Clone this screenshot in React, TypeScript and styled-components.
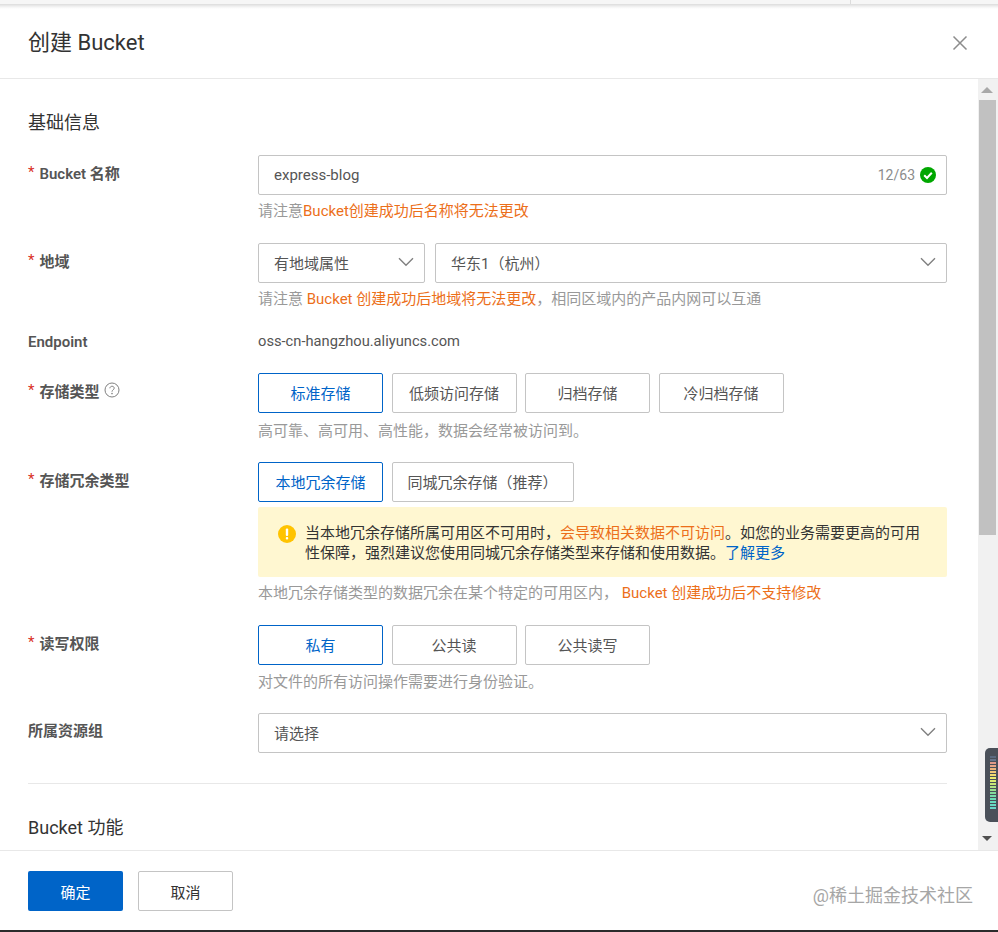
import React from 'react';
import styled, { createGlobalStyle } from 'styled-components';

const GlobalStyle = createGlobalStyle`
  html, body {
    margin: 0;
    padding: 0;
    background: #fff;
  }
  * {
    box-sizing: border-box;
  }
`;

const Chevron = () => (
  <svg width="16" height="10" viewBox="0 0 16 10" fill="none">
    <path d="M1 1.2 L8 8.2 L15 1.2" stroke="#808080" strokeWidth="1.4" />
  </svg>
);

const storageTypes = ['标准存储', '低频访问存储', '归档存储', '冷归档存储'];
const acl = ['私有', '公共读', '公共读写'];
const meterColors = [
  '#5a6a80', '#66768c', '#e09a88', '#e6a484', '#ecb47c', '#f0c878', '#f2dc70', '#ecec70', '#dcec74',
  '#c8e878', '#b0e484', '#98e090', '#84dc9c', '#74dca8', '#6cdcb4', '#68dcbc', '#68dcc4', '#68d8c8',
];

const App: React.FC = () => {
  return (
    <>
      <GlobalStyle />
      <Page>
        <TopStrip><StripTick /></TopStrip>
        <Header>
          <Title>创建 Bucket</Title>
          <CloseIcon width="16" height="16" viewBox="0 0 16 16" fill="none">
            <path d="M1.5 1.5 L14.5 14.5 M14.5 1.5 L1.5 14.5" stroke="#8c8c8c" strokeWidth="1.5" />
          </CloseIcon>
        </Header>
        <Body>
          <Content>
            <SectionTitle>基础信息</SectionTitle>

            <Row>
              <Label $required>Bucket 名称</Label>
              <Control>
                <Field>
                  <span>express-blog</span>
                  <Counter>
                    <CounterText>12/63</CounterText>
                    <svg width="16" height="16" viewBox="0 0 16 16">
                      <circle cx="8" cy="8" r="8" fill="#00a700" />
                      <path d="M4.2 8.2 L7 11 L11.8 5.8" stroke="#fff" strokeWidth="2" fill="none" />
                    </svg>
                  </Counter>
                </Field>
                <Help>请注意<Warn>Bucket创建成功后名称将无法更改</Warn></Help>
              </Control>
            </Row>

            <Row>
              <Label $required>地域</Label>
              <Control>
                <SelectGroup>
                  <Select $width={167}>
                    <span>有地域属性</span>
                    <Chevron />
                  </Select>
                  <Select $grow>
                    <span>华东1（杭州）</span>
                    <Chevron />
                  </Select>
                </SelectGroup>
                <Help>请注意 <Warn>Bucket 创建成功后地域将无法更改</Warn>，相同区域内的产品内网可以互通</Help>
              </Control>
            </Row>

            <Row $gap={21}>
              <Label $top={1}>Endpoint</Label>
              <Control><Plain>oss-cn-hangzhou.aliyuncs.com</Plain></Control>
            </Row>

            <Row $gap={21}>
              <Label $required>
                存储类型
                <svg width="16" height="16" viewBox="0 0 16 16" fill="none">
                  <circle cx="8" cy="8" r="7" stroke="#808080" />
                  <path d="M5.9 6.3 C5.9 3.6 10.2 3.6 10.2 6.2 C10.2 7.8 8 7.9 8 9.7" stroke="#808080" />
                  <circle cx="8" cy="11.6" r="0.8" fill="#808080" />
                </svg>
              </Label>
              <Control>
                <Options>
                  {storageTypes.map((t, i) => (
                    <Option key={t} $active={i === 0}>{t}</Option>
                  ))}
                </Options>
                <Help $top={8}>高可靠、高可用、高性能，数据会经常被访问到。</Help>
              </Control>
            </Row>

            <Row>
              <Label $required>存储冗余类型</Label>
              <Control>
                <Options>
                  <Option $active>本地冗余存储</Option>
                  <Option $width={182}>同城冗余存储（推荐）</Option>
                </Options>
                <Alert>
                  <svg width="18" height="18" viewBox="0 0 18 18">
                    <circle cx="9" cy="9" r="9" fill="#ffc300" />
                    <rect x="7.8" y="3.6" width="2.4" height="7.4" rx="1" fill="#fff" />
                    <rect x="7.8" y="12" width="2.4" height="2.4" rx="1" fill="#fff" />
                  </svg>
                  <AlertText>
                    当本地冗余存储所属可用区不可用时，<Warn>会导致相关数据不可访问</Warn>。如您的业务需要更高的可用性保障，强烈建议您使用同城冗余存储类型来存储和使用数据。<Link>了解更多</Link>
                  </AlertText>
                </Alert>
                <Help>本地冗余存储类型的数据冗余在某个特定的可用区内， <Warn>Bucket 创建成功后不支持修改</Warn></Help>
              </Control>
            </Row>

            <Row $gap={21}>
              <Label $required>读写权限</Label>
              <Control>
                <Options>
                  {acl.map((t, i) => (
                    <Option key={t} $active={i === 0}>{t}</Option>
                  ))}
                </Options>
                <Help $top={7}>对文件的所有访问操作需要进行身份验证。</Help>
              </Control>
            </Row>

            <Row $gap={30}>
              <Label $top={6}>所属资源组</Label>
              <Control>
                <Select>
                  <span>请选择</span>
                  <Chevron />
                </Select>
              </Control>
            </Row>

            <Divider />
            <SectionTitle>Bucket 功能</SectionTitle>
          </Content>
          <Scrollbar>
            <ScrollButton>
              <svg width="12" height="6" viewBox="0 0 12 6"><path d="M6 0 L12 6 L0 6 Z" fill="#a8a8a8" /></svg>
            </ScrollButton>
            <Thumb />
            <ScrollBottom>
              <svg width="10" height="5" viewBox="0 0 10 5"><path d="M0 0 L10 0 L5 5 Z" fill="#505050" /></svg>
            </ScrollBottom>
          </Scrollbar>
          <Meter>
            {meterColors.map((c, i) => (
              <MeterLine key={i} $color={c} />
            ))}
          </Meter>
        </Body>
        <Footer>
          <PrimaryButton>确定</PrimaryButton>
          <CancelButton>取消</CancelButton>
          <Watermark>@稀土掘金技术社区</Watermark>
        </Footer>
        <BottomBar />
      </Page>
    </>
  );
};

export default App;

const Page = styled.div`
  position: relative;
  display: flex;
  flex-direction: column;
  width: 998px;
  height: 932px;
  overflow: hidden;
  background: #fff;
  color: #333;
  font-family: Roboto, "Noto Sans CJK SC", sans-serif;
  font-size: 15px;
`;

const TopStrip = styled.div`
  flex: none;
  position: relative;
  height: 9px;
  background: linear-gradient(#f6f6f6 0, #f6f6f6 4px, #dcdcdc 4px, #f4f4f4 7px, #fff 9px);
`;

const StripTick = styled.div`
  position: absolute;
  left: 850px;
  top: 0;
  width: 1px;
  height: 4px;
  background: #dcdcdc;
`;

const Header = styled.header`
  flex: none;
  display: flex;
  align-items: center;
  justify-content: space-between;
  height: 70px;
  padding: 0 30px 2px 28px;
  border-bottom: 1px solid #e8e8e8;
`;

const Title = styled.h1`
  margin: 0;
  font-size: 22px;
  font-weight: 400;
  line-height: 30px;
  color: #333;
`;

const CloseIcon = styled.svg`
  display: block;
`;

const Body = styled.main`
  flex: 1;
  position: relative;
  display: flex;
  min-height: 0;
`;

const Content = styled.div`
  flex: 1;
  min-width: 0;
  padding: 32px 31px 0 28px;
  overflow: hidden;
`;

const SectionTitle = styled.h2`
  margin: 0 0 20px;
  font-size: 18px;
  font-weight: 400;
  line-height: 24px;
  color: #333;
`;

const Row = styled.div<{ $gap?: number }>`
  display: flex;
  margin-bottom: ${(p) => p.$gap ?? 22}px;
`;

const Label = styled.div<{ $required?: boolean; $top?: number }>`
  flex: none;
  display: flex;
  align-items: center;
  align-self: flex-start;
  gap: 5px;
  width: 230px;
  height: 20px;
  margin-top: ${(p) => p.$top ?? (p.$required ? 7 : 0)}px;
  font-size: 15px;
  font-weight: 600;
  color: #555;

  &::before {
    content: ${(p) => (p.$required ? "'*'" : 'none')};
    color: #d93026;
    font-weight: 400;
  }
`;

const Control = styled.div`
  flex: 1;
  min-width: 0;
`;

const Field = styled.div<{ $width?: number; $grow?: boolean }>`
  display: flex;
  align-items: center;
  justify-content: space-between;
  flex: ${(p) => (p.$grow ? 1 : 'none')};
  width: ${(p) => (p.$width ? `${p.$width}px` : 'auto')};
  height: 40px;
  padding: 0 10px 0 15px;
  border: 1px solid #c4c4c4;
  border-radius: 2px;
  color: #555;
  font-size: 15px;
`;

const Select = styled(Field)`
  padding-bottom: 2px;
`;

const Counter = styled.span`
  display: flex;
  align-items: center;
  gap: 5px;
  color: #8c8c8c;
`;

const CounterText = styled.span`
  font-size: 14px;
`;

const SelectGroup = styled.div`
  display: flex;
  gap: 10px;
`;

const Help = styled.div<{ $top?: number }>`
  margin-top: ${(p) => p.$top ?? 6}px;
  font-size: 15px;
  line-height: 20px;
  color: #999;
`;

const Warn = styled.span`
  color: #ec6f1a;
`;

const Link = styled.span`
  color: #0064c8;
`;

const Plain = styled.div`
  font-size: 14.7px;
  line-height: 20px;
  color: #555;
`;

const Options = styled.div`
  display: flex;
  gap: 8.5px;
`;

const Option = styled.div<{ $active?: boolean; $width?: number }>`
  display: flex;
  align-items: center;
  justify-content: center;
  width: ${(p) => p.$width ?? 125}px;
  height: 40px;
  padding-bottom: 2px;
  border: 1px solid ${(p) => (p.$active ? '#0064c8' : '#c4c4c4')};
  border-radius: 2px;
  color: ${(p) => (p.$active ? '#0064c8' : '#555')};
  font-size: 15px;
`;

const Alert = styled.div`
  display: flex;
  gap: 9px;
  height: 70px;
  margin-top: 5px;
  padding: 16px 20px 0;
  background: #fff7d1;
  border-radius: 2px;

  svg {
    flex: none;
    margin-top: 2px;
  }
`;

const AlertText = styled.div`
  font-size: 15px;
  line-height: 20px;
  color: #333;
`;

const Divider = styled.hr`
  margin: 0 0 32px;
  border: none;
  border-top: 1px solid #e8e8e8;
`;

const Scrollbar = styled.div`
  flex: none;
  display: flex;
  flex-direction: column;
  width: 20px;
  background: #f1f1f1;
`;

const ScrollButton = styled.div`
  display: flex;
  align-items: center;
  justify-content: center;
  height: 21px;
  padding-right: 2px;
`;

const Thumb = styled.div`
  width: 17px;
  height: 435px;
  margin-left: 1px;
  background: #c1c1c1;
`;

const ScrollBottom = styled.div`
  display: flex;
  justify-content: center;
  margin-top: auto;
  padding: 0 3px 9px 0;
`;

const Meter = styled.div`
  position: absolute;
  right: 0;
  top: 669px;
  display: flex;
  flex-direction: column;
  gap: 1px;
  width: 13px;
  height: 74px;
  padding: 8px 0 0 5px;
  background: #4a5059;
  border-radius: 5px 0 0 5px;
`;

const MeterLine = styled.div<{ $color: string }>`
  flex: none;
  width: 6px;
  height: 2px;
  background: ${(p) => p.$color};
`;

const Footer = styled.footer`
  flex: none;
  position: relative;
  display: flex;
  align-items: center;
  gap: 15px;
  height: 80px;
  padding: 1px 28px 0;
  border-top: 1px solid #e8e8e8;
`;

const PrimaryButton = styled.button`
  width: 95px;
  height: 40px;
  padding: 0;
  border: none;
  border-radius: 2px;
  background: #0064c8;
  color: #fff;
  font: inherit;
`;

const CancelButton = styled.button`
  width: 95px;
  height: 40px;
  padding: 0;
  border: 1px solid #c4c4c4;
  border-radius: 2px;
  background: #fff;
  color: #333;
  font: inherit;
`;

const Watermark = styled.div`
  position: absolute;
  right: 25px;
  top: 33px;
  font-size: 18px;
  line-height: 24px;
  color: #a6a6a6;
`;

const BottomBar = styled.div`
  flex: none;
  height: 2px;
  background: #2b2b2b;
`;
